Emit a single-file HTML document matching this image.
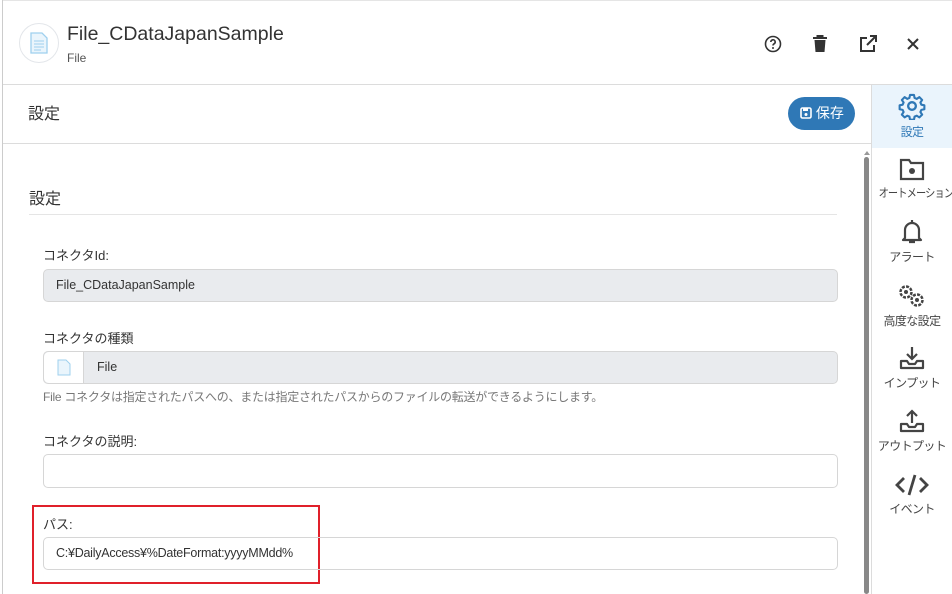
<!DOCTYPE html>
<html><head><meta charset="utf-8"><style>
*{box-sizing:border-box;margin:0;padding:0}
body{width:952px;height:594px;overflow:hidden;background:#fff;font-family:"Liberation Sans","Noto Sans CJK JP",sans-serif;color:#333;position:relative}
.abs{position:absolute}
.lbl{position:absolute;left:43px;font-size:13px;color:#333}
.inp{position:absolute;left:43px;width:795px;height:33px;border:1px solid #d6d6d6;border-radius:5px;font-size:12.5px;padding:0 12px;line-height:31px;color:#333}
.dis{background:#e9ebee}
.sb{position:absolute;left:872px;width:80px;text-align:center;font-size:12px;color:#444;white-space:nowrap;letter-spacing:-0.6px}
.sb svg{display:block;margin:0 auto 3px}
</style></head><body>
<div class="abs" style="left:2px;top:0;width:1px;height:594px;background:#ccc"></div>
<div class="abs" style="left:3px;top:0;width:949px;height:1px;background:#e5e5e5"></div>
<div class="abs" style="left:19px;top:23px;width:40px;height:40px;border:1px solid #e3e6ea;border-radius:50%"></div>
<svg class="abs" style="left:30px;top:32px" width="18" height="22" viewBox="0 0 18 22"><path d="M1 1h11l5 5v15H1z" fill="#eaf5fc" stroke="#9fd0ee" stroke-width="1.3"/><path d="M4 9h10M4 12h10M4 15h10M4 18h7" stroke="#9fd0ee"/></svg>
<div class="abs" style="left:67px;top:23px;font-size:19.5px;color:#333">File_CDataJapanSample</div>
<div class="abs" style="left:67px;top:51px;font-size:12px;color:#555">File</div>
<svg class="abs" style="left:764px;top:35px" width="18" height="18" viewBox="0 0 18 18"><circle cx="9" cy="9" r="7.5" fill="none" stroke="#333" stroke-width="1.6"/><path d="M6.8 7a2.2 2.2 0 1 1 3 2c-.7.3-.8.8-.8 1.5" fill="none" stroke="#333" stroke-width="1.6"/><circle cx="9" cy="13" r="1" fill="#333"/></svg>
<svg class="abs" style="left:812px;top:35px" width="16" height="18" viewBox="0 0 16 18"><path d="M1 3h14M5.5 3V1h5v2" stroke="#333" stroke-width="2" fill="none"/><path d="M2.5 5h11l-1 12h-9z" fill="#333"/></svg>
<svg class="abs" style="left:859px;top:35px" width="18" height="18" viewBox="0 0 18 18"><path d="M8 3H2v13h13v-6" fill="none" stroke="#333" stroke-width="2"/><path d="M11 1h6v6M17 1L8 10" fill="none" stroke="#333" stroke-width="2"/></svg>
<svg class="abs" style="left:907px;top:38px" width="12" height="12" viewBox="0 0 12 12"><path d="M1 1l10 10M11 1L1 11" stroke="#333" stroke-width="2"/></svg>
<div class="abs" style="left:3px;top:84px;width:949px;height:1px;background:#dcdcdc"></div>
<div class="abs" style="left:28px;top:100px;font-size:16px;color:#333">設定</div>
<div class="abs" style="left:788px;top:97px;width:67px;height:33px;border-radius:17px;background:#2f78b6;color:#fff;font-size:14px;line-height:33px;padding-left:12px"><svg width="12" height="12" viewBox="0 0 12 12" style="vertical-align:-1px"><rect x="1" y="1" width="10" height="10" rx="1.5" fill="none" stroke="#fff" stroke-width="1.6"/><rect x="3" y="1" width="5" height="3" fill="#fff"/><circle cx="6" cy="7.5" r="1.5" fill="#fff"/></svg> 保存</div>
<div class="abs" style="left:3px;top:143px;width:868px;height:1px;background:#dcdcdc"></div>
<div class="abs" style="left:871px;top:85px;width:1px;height:509px;background:#dcdcdc"></div>
<div class="abs" style="left:872px;top:85px;width:80px;height:63px;background:#eaf4fc"></div>
<div class="sb" style="top:92px;color:#2f78b6"><svg width="28" height="28" viewBox="0 0 24 24"><path d="M10.3 2.5h3.4l.5 2.6 1.9.8 2.2-1.5 2.4 2.4-1.5 2.2.8 1.9 2.6.5v3.4l-2.6.5-.8 1.9 1.5 2.2-2.4 2.4-2.2-1.5-1.9.8-.5 2.6h-3.4l-.5-2.6-1.9-.8-2.2 1.5-2.4-2.4 1.5-2.2-.8-1.9-2.6-.5v-3.4l2.6-.5.8-1.9-1.5-2.2 2.4-2.4 2.2 1.5 1.9-.8z" fill="none" stroke="#2f78b6" stroke-width="1.8" stroke-linejoin="round"/><circle cx="12" cy="12" r="3.3" fill="none" stroke="#2f78b6" stroke-width="2"/></svg>設定</div>
<div class="sb" style="top:157px"><svg width="26" height="24" viewBox="0 0 26 24"><path d="M2 3h8l2 3h12v16H2z" fill="none" stroke="#444" stroke-width="2.2"/><circle cx="13" cy="14" r="3" fill="#444"/></svg><span style="display:inline-block;font-size:12px;letter-spacing:-1px;transform:scaleX(0.85)">オートメーション</span></div>
<div class="sb" style="top:219px"><svg width="24" height="26" viewBox="0 0 24 26"><path d="M5 19V11a7 7 0 0 1 14 0v8l2 2H3z" fill="none" stroke="#444" stroke-width="2.2" stroke-linejoin="round"/><path d="M9 23h6M12 1v3" stroke="#444" stroke-width="2.2"/></svg>アラート</div>
<div class="sb" style="top:283px"><svg width="32" height="26" viewBox="0 0 32 26"><circle cx="10" cy="9" r="5.5" fill="none" stroke="#444" stroke-width="2.5" stroke-dasharray="3 1.3"/><circle cx="10" cy="9" r="2" fill="#444"/><circle cx="21" cy="17" r="5.5" fill="none" stroke="#444" stroke-width="2.5" stroke-dasharray="3 1.3"/><circle cx="21" cy="17" r="2" fill="#444"/></svg>高度な設定</div>
<div class="sb" style="top:345px"><svg width="26" height="26" viewBox="0 0 26 26"><path d="M13 2v12M8 9l5 5 5-5" fill="none" stroke="#444" stroke-width="2.2"/><path d="M2 16v7h22v-7h-6l-2 3h-6l-2-3z" fill="none" stroke="#444" stroke-width="2.2" stroke-linejoin="round"/></svg>インプット</div>
<div class="sb" style="top:408px"><svg width="26" height="26" viewBox="0 0 26 26"><path d="M13 15V3M8 8l5-5 5 5" fill="none" stroke="#444" stroke-width="2.2"/><path d="M2 16v7h22v-7h-6l-2 3h-6l-2-3z" fill="none" stroke="#444" stroke-width="2.2" stroke-linejoin="round"/></svg>アウトプット</div>
<div class="sb" style="top:473px"><svg width="34" height="24" viewBox="0 0 34 24"><path d="M9 5l-7 7 7 7M25 5l7 7-7 7M20 2l-6 20" fill="none" stroke="#444" stroke-width="2.8"/></svg>イベント</div>
<div class="abs" style="left:864px;top:151px;width:0;height:0;border-left:3px solid transparent;border-right:3px solid transparent;border-bottom:4px solid #999"></div>
<div class="abs" style="left:864px;top:157px;width:5px;height:437px;background:#888;border-radius:3px"></div>
<div class="abs" style="left:29px;top:185px;font-size:16px;color:#333">設定</div>
<div class="abs" style="left:29px;top:214px;width:808px;height:1px;background:#e5e5e5"></div>
<div class="lbl" style="top:245px">コネクタId:</div>
<div class="inp dis" style="top:269px">File_CDataJapanSample</div>
<div class="lbl" style="top:328px">コネクタの種類</div>
<div class="inp dis" style="top:351px;padding-left:53px">File</div>
<div class="abs" style="left:44px;top:352px;width:40px;height:31px;background:#fff;border-right:1px solid #d6d6d6;border-radius:5px 0 0 5px"></div>
<svg class="abs" style="left:57px;top:359px" width="14" height="17" viewBox="0 0 14 17"><path d="M1 1h8l4 4v11H1z" fill="#eaf5fc" stroke="#9fd0ee"/></svg>
<div class="abs" style="left:43px;top:388px;font-size:12px;color:#777;letter-spacing:-0.25px">File コネクタは指定されたパスへの、または指定されたパスからのファイルの転送ができるようにします。</div>
<div class="lbl" style="top:431px">コネクタの説明:</div>
<div class="inp" style="top:454px;height:34px"></div>
<div class="abs" style="left:32px;top:505px;width:288px;height:79px;border:2px solid #e0202a"></div>
<div class="lbl" style="top:514px">パス:</div>
<div class="inp" style="top:537px;letter-spacing:-0.25px">C:¥DailyAccess¥%DateFormat:yyyyMMdd%</div>
</body></html>
